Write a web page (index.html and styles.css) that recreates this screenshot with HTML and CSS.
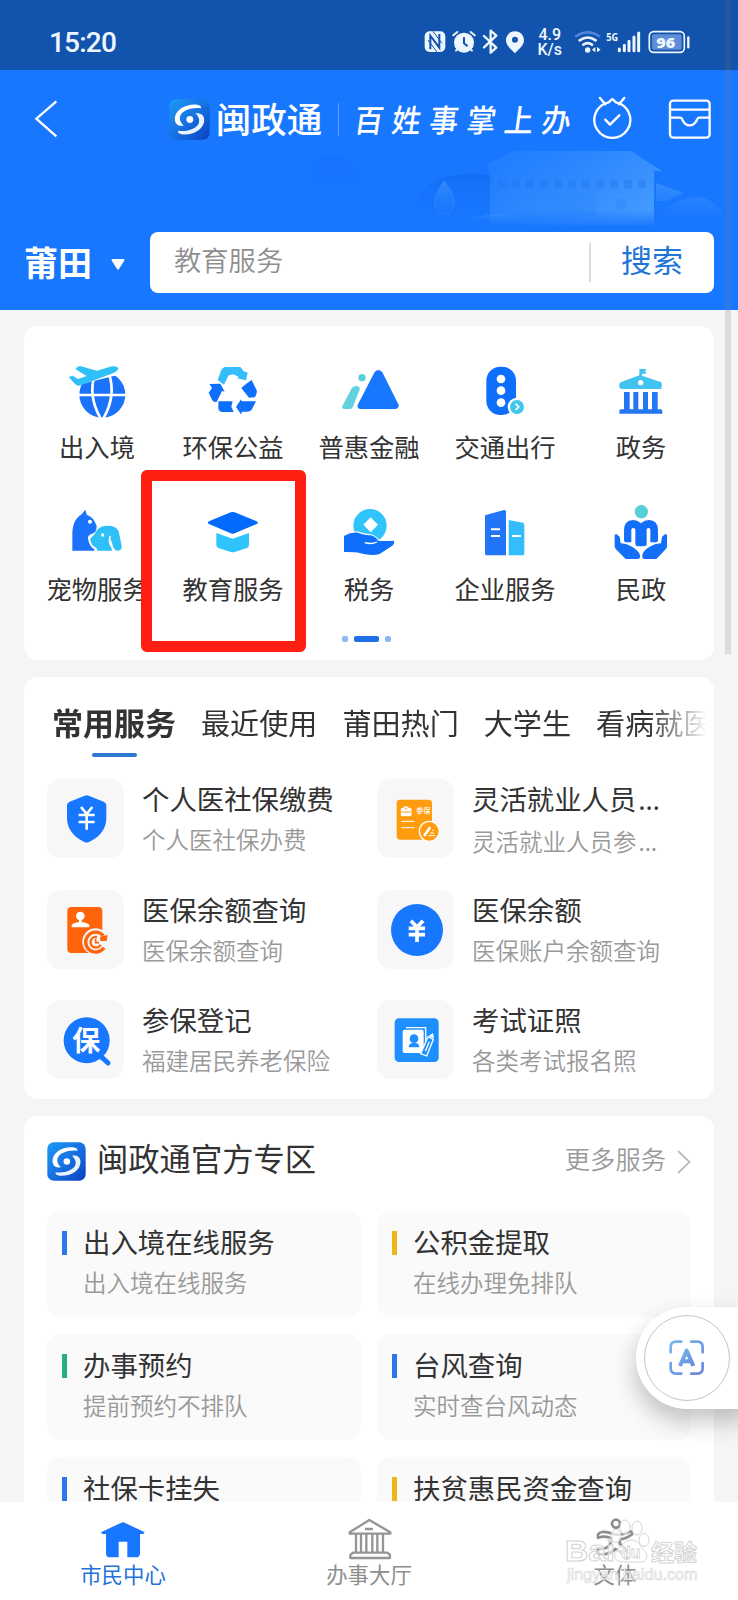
FILE: index.html
```html
<!DOCTYPE html>
<html lang="zh-CN">
<head>
<meta charset="utf-8">
<title>闽政通</title>
<link rel="stylesheet" href="styles.css">
</head>
<body>
<svg width="0" height="0" class="defs">
  <defs>
    <linearGradient id="logoBg" x1="0" y1="0" x2="1" y2="1"><stop offset="0" stop-color="#1b9bf5"/><stop offset=".5" stop-color="#1672e2"/><stop offset="1" stop-color="#0b3fc0"/></linearGradient>
    <linearGradient id="wall" x1="0" y1="0" x2="1" y2=".6"><stop offset="0" stop-color="#3a92ff" stop-opacity=".2"/><stop offset="1" stop-color="#55a8ff" stop-opacity=".7"/></linearGradient>
    <linearGradient id="fade" x1="0" y1="0" x2="0" y2="1"><stop offset="0" stop-color="#5aaaff" stop-opacity=".45"/><stop offset="1" stop-color="#3a90ff" stop-opacity="0"/></linearGradient>
    <linearGradient id="hill" x1="0" y1="0" x2="0" y2="1"><stop offset="0" stop-color="#0d63e8" stop-opacity=".55"/><stop offset="1" stop-color="#1877ff" stop-opacity="0"/></linearGradient>
    <linearGradient id="scan" x1="0" y1="0" x2="1" y2="1"><stop offset="0" stop-color="#79b8e8"/><stop offset=".5" stop-color="#6d9fe6"/><stop offset="1" stop-color="#6b86d8"/></linearGradient>
    <symbol id="logo" viewBox="0 0 120 120">
      <rect x="1" y="1" width="118" height="118" rx="20" fill="url(#logoBg)"/>
      <path d="M17 60C16 34 44 15 78 16C90 17 96 22 93 27C70 23 36 32 32 52C30 62 35 70 43 78C28 80 18 74 17 60Z" fill="#fff"/>
      <path d="M103 60C104 86 76 105 42 104C30 103 24 98 27 93C50 97 84 88 88 68C90 58 85 50 77 42C92 40 102 46 103 60Z" fill="#eaf3ff"/>
      <circle cx="61" cy="60" r="10" fill="#fff"/>
    </symbol>
  </defs>
</svg>

<div class="screen">
  <div class="status">
    <span class="time">15:20</span>
    <div class="indicators">
      <svg class="sys" viewBox="165 84 310 84" width="103.300" height="28">
        <rect x="170" y="94" width="62" height="62" rx="15" fill="#eef7ff"/>
        <path d="M187 148V107L214 143V102" fill="none" stroke="#1153ad" stroke-width="6"/>
        <path d="M195 94L222 130M180 120L207 156" fill="none" stroke="#1153ad" stroke-width="3"/>
        <circle cx="288" cy="128" r="30" fill="#eef7ff"/>
        <path d="M256 106L268 96M320 106L308 96M264 152L270 146M312 152L306 146" stroke="#eef7ff" stroke-width="6" stroke-linecap="round"/>
        <path d="M288 112V130L299 139" fill="none" stroke="#1153ad" stroke-width="6"/>
        <path d="M348 108L385 143L368 158V92L385 107L348 142" fill="none" stroke="#eef7ff" stroke-width="7" stroke-linejoin="round" stroke-linecap="round"/>
        <path d="M441 94C425 94 414 106 414 121C414 138 430 148 441 160C452 148 468 138 468 121C468 106 457 94 441 94Z" fill="#eef7ff"/>
        <circle cx="441" cy="119" r="9" fill="#1153ad"/>
      </svg>
      <div class="speed"><span>4.9</span><span>K/s</span></div>
      <svg class="net" viewBox="615 84 355 84" width="118.300" height="28">
        <path d="M622 108Q656 86 690 108" fill="none" stroke="#4f86d6" stroke-width="8" stroke-linecap="round"/>
        <path d="M632 121Q656 104 680 121M643 134Q656 125 669 134" fill="none" stroke="#eef7ff" stroke-width="8" stroke-linecap="round"/>
        <circle cx="656" cy="150" r="8" fill="#eef7ff"/>
        <path d="M679 141V157L669 149ZM684 141V157L695 149Z" fill="#eef7ff"/>
        <text x="712" y="122" class="gen" textLength="36" lengthAdjust="spacingAndGlyphs">5G</text>
        <path d="M751 147V152M766 136V152M780 124V152M795 111V152M809 99V152" stroke="#eef7ff" stroke-width="9" stroke-linecap="round"/>
        <rect x="841" y="95" width="105" height="62" rx="13" fill="none" stroke="#eef7ff" stroke-width="5"/>
        <rect x="849" y="103" width="89" height="46" rx="6" fill="#5f8dd6"/>
        <path d="M958 112V142" stroke="#eef7ff" stroke-width="7" stroke-linecap="round"/>
        <text x="862" y="143" class="pct" textLength="57" lengthAdjust="spacingAndGlyphs">96</text>
      </svg>
    </div>
  </div>

  <header class="head">
    <svg class="art" viewBox="0 0 480 100" width="480" height="100">
      <path d="M10 62Q30 60 40 44Q44 18 64 18Q84 18 92 38Q108 54 122 60V90H0Z" fill="url(#hill)" opacity=".25"/>
      <path d="M146 66Q160 37 200 37Q216 36 226 40V85H142Z" fill="url(#hill)" opacity=".8"/>
      <path class="melt" d="M218 28L246 14H363L394 34H386V88H222V36Z" fill="url(#wall)"/>
      <path d="M230 47H378" stroke="#1f74e6" stroke-width="9" stroke-dasharray="8 6" opacity=".35"/>
      <path d="M286 56H328V80H286ZM252 62H262V72H252ZM348 62H358V72H348Z" fill="#2d86f8" opacity=".4"/>
      <path d="M176 44C170 52 167 58 167 65C167 73 171 77 176 77C182 77 186 73 186 65C186 58 182 52 176 44Z" fill="url(#fade)" stroke="#4ba3ff" stroke-opacity=".3"/>
      <path d="M196 86Q228 68 262 86Z" fill="url(#fade)"/>
      <path d="M388 46L416 56L398 64H388ZM390 86Q398 62 430 60Q450 62 460 86Z" fill="url(#fade)"/>
    </svg>
    <div class="titlebar">
      <svg class="back" viewBox="94 296 74 120" width="24.700" height="40"><path d="M164 303L104 355L164 408" fill="none" stroke="#fff" stroke-width="7"/></svg>
      <div class="brand">
        <svg width="41" height="41"><use href="#logo"/></svg>
        <span class="brand-name">闽政通</span>
        <span class="brand-line"></span>
        <span class="slogan">百姓事掌上办</span>
      </div>
      <svg class="tool" viewBox="672 286 124 142" width="41.300" height="47.300">
        <g fill="none" stroke="#fff" stroke-width="7" stroke-linecap="round" stroke-linejoin="round">
          <path d="M722 308A54 54 0 1 0 744 308L733 298Z"/><path d="M696 295L712 314M769 295L753 314M712 360L726 375L754 347"/>
        </g>
      </svg>
      <svg class="tool inbox" viewBox="898 292 136 128" width="45.300" height="42.700">
        <g fill="none" stroke="#fff" stroke-width="7">
          <rect x="907" y="300" width="119" height="111" rx="10"/><path d="M907 327H1026M907 351H938C947 351 943 374 966 374C989 374 985 351 994 351H1026"/>
        </g>
      </svg>
    </div>
    <div class="searchrow">
      <span class="city">莆田</span>
      <svg class="caret" viewBox="0 0 14 11" width="14" height="11"><path d="M1 0H13Q14 .5 13 2L8 10Q7 11 6 10L1 2Q0 .5 1 0Z" fill="#fff"/></svg>
      <div class="search"><span class="ph">教育服务</span><span class="sep"></span><span class="go">搜索</span></div>
    </div>
  </header>

  <main class="content">
    <section class="card cats">
      <div class="grid">
        <div class="cat">
          <svg viewBox="201 123 180 180">
            <circle cx="307" cy="224" r="69" fill="#1c73fb"/>
            <g fill="none" stroke="#fff" stroke-width="8"><path d="M236 225H378M286 158Q262 226 302 296M326 158Q350 226 310 296"/></g>
            <path d="M205 202L362 163V130H205Z" fill="#fff"/>
            <path d="M206 171L218 167L234 177L260 168L227 148Q230 138 243 139L291 152L330 140Q350 136 355 145Q354 155 335 161L242 196Q232 199 225 192Z" fill="#2fc0f8"/>
          </svg><span>出入境</span></div>
        <div class="cat">
          <svg viewBox="609 123 180 180">
            <path d="M675 141H721L731 154L743 158L738 181L711 175L717 171L700 163L686 166L672 194L653 180L664 150Q668 142 675 141Z" fill="#33bdfa"/>
            <path d="M628 192L661 191L674 215L666 213L650 246Q640 248 636 239L626 218L636 204ZM741 190L755 180L770 211Q772 221 765 232L747 233L724 204ZM655 244H698L694 260L701 276H668Q656 276 655 265ZM708 261L723 238L725 244H768L755 269Q750 275 741 275H725L724 284Z" fill="#0d6ffb"/>
          </svg><span>环保公益</span></div>
        <div class="cat">
          <svg viewBox="1017 123 180 180">
            <circle cx="1086" cy="173" r="11" fill="#5bd0d8"/>
            <path d="M1056 203Q1062 197 1070 198Q1081 200 1079 209L1058 262Q1056 267 1050 267H1033Q1024 266 1027 258Z" fill="#62d3dc"/>
            <path d="M1124 156Q1135 144 1147 157L1195 253Q1199 264 1188 267H1081Q1069 265 1074 253Z" fill="#1877ff"/>
          </svg><span>普惠金融</span></div>
        <div class="cat">
          <svg viewBox="321 123 180 180">
            <rect x="355" y="140" width="89" height="145" rx="42" fill="#0d6ffb"/>
            <g fill="#fff"><circle cx="399" cy="177" r="13"/><circle cx="399" cy="212" r="13"/><circle cx="399" cy="248" r="13"/><circle cx="447" cy="261" r="28"/></g>
            <circle cx="447" cy="261" r="21" fill="#41c6ee"/>
            <path d="M443 251L452 261L443 270" fill="none" stroke="#fff" stroke-width="5"/>
          </svg><span>交通出行</span></div>
        <div class="cat">
          <svg viewBox="729 123 180 180">
            <path d="M814 166V147H836L831 154L836 161H822V167L880 187Q884 196 880 206Q877 208 873 207H761Q752 205 754 191L758 187Z" fill="#40c4ef"/>
            <circle cx="818" cy="188" r="8" fill="#fff"/>
            <path d="M768 216H785V268H796V216H811V268H825V216H840V268H852V216H869V268H879Q883 269 883 275V281H754V275Q754 269 758 268H768Z" fill="#2377f2"/>
          </svg><span>政务</span></div>
        <div class="cat">
          <svg viewBox="201 549 180 180">
            <path d="M217 692V640C218 608 230 592 245 583L256 569L260 584Q280 592 285 607L290 618Q290 636 280 640Q262 645 264 657Q270 683 283 687V692Z" fill="#1c73fb"/>
            <circle cx="270" cy="605" r="6" fill="#fff"/>
            <path d="M270 657Q286 642 292 629Q302 617 322 617Q350 617 356 634L365 678Q366 690 355 692Q345 693 341 684L333 661Q328 650 330 677Q337 685 336 692H292Q291 682 280 679Q272 670 270 657Z" fill="#2fc0f8"/>
            <circle cx="308" cy="645" r="5" fill="#fff"/><path d="M330 648Q326 662 331 674" fill="none" stroke="#fff" stroke-width="5"/>
          </svg><span>宠物服务</span></div>
        <div class="cat">
          <svg viewBox="609 549 180 180">
            <path d="M649 639L698 656L747 639V675Q747 681 741 684L704 696Q698 698 692 696L655 684Q649 681 649 675Z" fill="#2fc4fb"/>
            <path d="M692 577Q698 575 704 577L770 604Q777 608 770 612L704 640Q698 643 692 640L627 612Q620 608 627 604Z" fill="#026bfd"/>
          </svg><span>教育服务</span></div>
        <div class="cat">
          <svg viewBox="1017 549 180 180">
            <circle cx="1110" cy="617" r="50" fill="#2fc4fb"/><path d="M1112 592L1134 614L1112 637L1090 614Z" fill="#fff"/>
            <path d="M1032 648Q1052 636 1074 638Q1098 646 1112 646Q1128 650 1134 662Q1155 664 1181 662Q1185 668 1179 676L1140 701Q1124 708 1096 703Q1070 694 1032 696Z" fill="#0d6ffb" stroke="#fff" stroke-width="7" paint-order="stroke"/>
            <path d="M1094 668Q1115 674 1131 666" fill="none" stroke="#fff" stroke-width="4"/>
          </svg><span>税务</span></div>
        <div class="cat">
          <svg viewBox="321 549 180 180">
            <path d="M351 586L408 570Q414 569 414 576V706H356Q351 706 351 701Z" fill="#2275f6"/>
            <path d="M422 600L464 608Q469 609 469 616V701Q469 706 464 706H422Z" fill="#33bdfa"/>
            <path d="M369 628H396M369 648H396M432 648H459" stroke="#fff" stroke-width="6"/>
          </svg><span>企业服务</span></div>
        <div class="cat">
          <svg viewBox="729 549 180 180">
            <circle cx="820" cy="575" r="20" fill="#58d0d8"/>
            <path d="M768 662V630Q768 602 795 600Q808 600 819 610Q830 600 843 600Q870 602 870 630V662Q867 668 860 667H847V628Q842 620 836 628V676Q831 679 825 679H809Q803 679 802 672V628Q796 620 790 628V667H779Q770 668 768 662ZM740 646Q740 642 746 643L755 650L758 670Q774 670 792 680Q812 692 816 705V712Q815 717 809 717H773L744 688Q740 683 740 678ZM897 646Q897 642 891 643L882 650L879 670Q863 670 845 680Q825 692 823 705V712Q824 717 829 717H865L893 688Q897 683 897 678Z" fill="#146ff8"/>
          </svg><span>民政</span></div>
      </div>
      <div class="pager"><i></i><i class="on"></i><i></i></div>
      <div class="mark"></div>
    </section>

    <section class="card services">
      <div class="tabs"><span class="tab on">常用服务</span><span class="tab">最近使用</span><span class="tab">莆田热门</span><span class="tab">大学生</span><span class="tab">看病就医</span></div>
      <div class="list">
        <div class="svc"><div class="ic"><svg viewBox="142 328 228 234">
          <path d="M255 378Q261 375 267 378L312 396Q320 399 320 407V445C320 482 295 505 268 517Q261 520 254 517C228 505 202 482 202 445V407Q202 399 210 396Z" fill="#1877ff"/>
          <path d="M244 412L261 433L278 412M261 433V480M237 436H285M237 457H285" fill="none" stroke="#fff" stroke-width="8"/></svg></div>
          <div class="tx"><b>个人医社保缴费</b><em>个人医社保办费</em></div></div>
        <div class="svc"><div class="ic"><svg viewBox="28 328 228 234">
          <rect x="87" y="390" width="106" height="120" rx="10" fill="#ff9c10"/>
          <path d="M101 417H109V412H121V417H130V438H101ZM101 455H140M101 474H140" fill="#fff" stroke="#fff" stroke-width="3"/>
          <path d="M101 427H130M112 417H118" stroke="#ff9c10" stroke-width="3"/>
          <text x="145" y="431" class="mini">参保</text>
          <circle cx="185" cy="485" r="30" fill="#ff9c10" stroke="#fff" stroke-width="4"/>
          <path d="M171 496L186 475" stroke="#fff" stroke-width="8" stroke-linecap="round"/><path d="M182 498H203M188 490H199M194 482H199" stroke="#fff" stroke-width="3"/></svg></div>
          <div class="tx"><b>灵活就业人员<i class="dots">…</i></b><em>灵活就业人员参<i class="dots">…</i></em></div></div>
        <div class="svc"><div class="ic"><svg viewBox="142 660 228 234">
          <rect x="203" y="711" width="105" height="138" rx="12" fill="#ff640a"/>
          <circle cx="242" cy="738" r="13" fill="#fff"/><path d="M238 748H246V756Q265 758 269 766V772H216V766Q220 758 238 756Z" fill="#fff"/>
          <circle cx="288" cy="815" r="40" fill="#f7f7f7"/>
          <path d="M311 797A30 30 0 1 0 313 833" fill="none" stroke="#ff640a" stroke-width="10"/><path d="M301 800L324 795L321 813H302Z" fill="#ff640a"/>
          <path d="M303 824A16 16 0 1 1 292 801" fill="none" stroke="#ff640a" stroke-width="7"/><path d="M288 806V818H298" fill="none" stroke="#ff640a" stroke-width="5"/></svg></div>
          <div class="tx"><b>医保余额查询</b><em>医保余额查询</em></div></div>
        <div class="svc"><div class="ic"><svg viewBox="28 660 228 234">
          <circle cx="148" cy="780" r="78" fill="#1877ff"/>
          <path d="M130 752L148 772L166 752M148 772V816M123 775H172M123 794H172" fill="none" stroke="#fff" stroke-width="11"/></svg></div>
          <div class="tx"><b>医保余额</b><em>医保账户余额查询</em></div></div>
        <div class="svc"><div class="ic"><svg viewBox="142 992 228 234">
          <path d="M300 1158L325 1181" stroke="#1877ff" stroke-width="15" stroke-linecap="round"/><circle cx="261" cy="1113" r="69" fill="#1877ff"/>
          <text x="218" y="1144" class="bao">保</text></svg></div>
          <div class="tx"><b>参保登记</b><em>福建居民养老保险</em></div></div>
        <div class="svc"><div class="ic"><svg viewBox="28 992 228 234">
          <rect x="81" y="1047" width="132" height="131" rx="13" fill="#1e8fff"/>
          <path d="M115 1075H174V1130" fill="none" stroke="#fff" stroke-width="4"/><rect x="105" y="1081" width="63" height="70" rx="6" fill="#fff"/>
          <circle cx="139" cy="1108" r="13" fill="#1e8fff"/><path d="M123 1134Q123 1123 134 1121H144Q155 1123 155 1134Z" fill="#1e8fff"/>
          <path d="M181 1102L197 1110L177 1160L159 1153Z" fill="#1e8fff" stroke="#fff" stroke-width="4"/><path d="M183 1100L196 1091L199 1107Z" fill="#fff"/><path d="M185 1117L173 1145" stroke="#fff" stroke-width="4"/></svg></div>
          <div class="tx"><b>考试证照</b><em>各类考试报名照</em></div></div>
      </div>
    </section>

    <section class="card zone">
      <div class="zone-head"><svg width="39" height="39"><use href="#logo"/></svg><h2>闽政通官方专区</h2><span class="more">更多服务</span>
        <svg class="chev" viewBox="0 0 14 24" width="14" height="24"><path d="M1 1L12.500 12L1 23" fill="none" stroke="#bcbcbc" stroke-width="1.800"/></svg></div>
      <div class="tiles">
        <div class="tile blue"><b>出入境在线服务</b><em>出入境在线服务</em></div>
        <div class="tile gold"><b>公积金提取</b><em>在线办理免排队</em></div>
        <div class="tile green"><b>办事预约</b><em>提前预约不排队</em></div>
        <div class="tile blue"><b>台风查询</b><em>实时查台风动态</em></div>
        <div class="tile blue"><b>社保卡挂失</b></div>
        <div class="tile gold"><b>扶贫惠民资金查询</b></div>
      </div>
    </section>
  </main>

  <nav class="nav">
    <div class="navi on"><svg viewBox="297 110 144 132" width="48" height="44"><path d="M364 127Q369 125 374 127L434 156L430 161H420V220Q419 231 408 231H382V184H356V231H330Q319 231 318 220V161H307L303 156Z" fill="#1877ff"/></svg><span>市民中心</span></div>
    <div class="navi"><svg viewBox="-72 110 144 132" width="48" height="44"><g fill="none" stroke="#959595" stroke-width="7" stroke-linejoin="round"><path d="M1 119L64 156V160H-58V156ZM-56 233V224L-48 217H55L63 224V233ZM-39 160V217M-24 160V217M-8 160V217M10 160V217M25 160V217M42 160V217M-12 146H12"/></g></svg><span>办事大厅</span></div>
    <div class="navi"><svg viewBox="669 110 144 132" width="48" height="44"><g fill="none" stroke="#8d8d8d" stroke-width="8" stroke-linecap="round"><circle cx="744" cy="130" r="12"/><path d="M690 172Q686 158 702 155Q718 154 733 160Q757 168 787 153Q795 154 792 162Q772 176 756 177L755 190Q780 208 782 232Q776 240 769 231Q763 214 742 206Q724 225 694 221Q682 212 694 205Q718 208 727 190L731 174Q712 165 690 172Z"/></g></svg><span>文体</span></div>
  </nav>

  <div class="watermark">
    <svg viewBox="0 0 140 72" width="140" height="72">
      <text x="4" y="61" class="wm-lat" textLength="50" lengthAdjust="spacingAndGlyphs">Bai</text>
      <g fill="#fff" fill-opacity=".7" stroke="#d4d4d4" stroke-width="1">
        <path d="M70 40C77 40 78 45 83 50C89 57 85 63 77 62H62C54 62 51 56 56 50C61 45 64 40 70 40Z"/>
        <ellipse cx="55" cy="36" rx="5" ry="6.500"/><ellipse cx="64" cy="27" rx="5" ry="7"/><ellipse cx="76" cy="28" rx="5" ry="7"/><ellipse cx="83" cy="40" rx="5" ry="6.500"/>
      </g>
      <text x="60" y="58" class="wm-du">du</text><text x="90" y="61" class="wm-cn">经验</text>
    </svg>
    <span class="wm-url">jingyan.baidu.com</span>
  </div>

  <div class="float"><div class="ring"><svg viewBox="900 716 112 112" width="37.300" height="37.300">
    <path d="M908 756V740Q908 724 924 724H940M970 724H988Q1004 724 1004 740V756M1004 788V804Q1004 820 988 820H970M940 820H924Q908 820 908 804V788" fill="none" stroke="url(#scan)" stroke-width="8" stroke-linecap="round"/>
    <path d="M936 797L956 751L976 797M943 783H969" fill="none" stroke="url(#scan)" stroke-width="12" stroke-linejoin="round"/></svg></div></div>
  <div class="scrollbar"></div>
</div>
</body>
</html>
```

FILE: styles.css
```css
* { box-sizing: border-box; }
body { margin: 0; font-family: "Noto Sans CJK SC", "Noto Sans", sans-serif; color: #333; }
.defs { position: absolute; }
svg { display: block; flex: none; }
em, b, i { font-style: normal; font-weight: 400; }
.screen { position: relative; width: 738px; height: 1600px; overflow: hidden; background: #f5f5f6; display: flex; flex-direction: column; }

/* status bar */
.status { height: 70px; flex: none; background: #1153ad; display: flex; justify-content: space-between; padding: 14px 46px 0 49px; color: #eef7ff; }
.time { font: 500 28px/58px Roboto, sans-serif; letter-spacing: -.8px; }
.indicators { display: flex; align-items: center; height: 56px; }
.speed { display: flex; flex-direction: column; width: 28px; margin: 0 10px 0 9px; font: 500 16px/15px Roboto, sans-serif; align-items: center; }
.gen { font: 700 34px "Open Sans", sans-serif; fill: #eef7ff; }
.pct { font: 800 44px "Open Sans", sans-serif; fill: #eef7ff; }

/* header */
.head { position: relative; height: 240px; flex: none; background: #1877ff; color: #fff; }
.art { position: absolute; left: 268px; top: 67px; -webkit-mask-image: linear-gradient(#000 72px, transparent 92px); mask-image: linear-gradient(#000 72px, transparent 92px); }
.titlebar { position: relative; display: flex; align-items: center; height: 98px; padding-left: 33px; }
.brand { display: flex; align-items: center; margin-left: 111px; width: 423px; }
.brand-name { font-size: 35.500px; font-weight: 500; line-height: 40px; margin: -3px 0 0 6px; width: 107px; white-space: nowrap; }
.brand-line { width: 1px; height: 33px; background: #5a9fff; margin-left: 15px; }
.slogan { font-size: 29px; font-weight: 500; letter-spacing: 8.500px; line-height: 40px; margin: -3px 0 0 16px; white-space: nowrap; transform: skewX(-8deg) scaleY(1.08); }
.inbox { margin-left: 34.500px; }
.searchrow { position: relative; display: flex; align-items: center; margin-top: 64px; height: 61px; padding-left: 24px; }
.city { font-size: 34px; font-weight: 700; line-height: 61px; width: 68px; margin-top: -3px; }
.caret { margin-left: 19px; margin-top: 3px; }
.search { margin-left: 25px; width: 564px; height: 61px; background: #fff; border-radius: 8px; display: flex; align-items: center; padding-left: 24px; }
.ph { font-size: 27.300px; line-height: 50px; color: #8f8f8f; width: 415px; margin-top: -7px; font-weight: 350; }
.sep { width: 2px; height: 39px; background: #dcdcdc; }
.go { font-size: 31px; line-height: 50px; color: #2175d9; margin: -7px 0 0 30px; }

/* cards */
.content { flex: 1; min-height: 0; overflow: hidden; padding: 16px 24px 0 24px; display: flex; flex-direction: column; gap: 17px; }
.card { background: #fff; border-radius: 14px; flex: none; }
.cats { position: relative; height: 334px; padding: 35px 4px 0 5px; }
.grid { display: grid; grid-template-columns: repeat(5, 136px); grid-auto-rows: 142px; }
.cat { display: flex; flex-direction: column; align-items: center; }
.cat svg { width: 60px; height: 60px; }
.cat span { font-size: 25.300px; line-height: 36px; margin-top: 7px; white-space: nowrap; }
.pager { display: flex; justify-content: center; align-items: center; gap: 6px; height: 6px; margin-top: -9px; margin-left: -7px; }
.pager i { width: 6px; height: 6px; border-radius: 2px; background: #8db8f3; }
.pager .on { width: 25px; background: #1f70e6; }
.mark { position: absolute; left: 117px; top: 144px; width: 165px; height: 182px; border: 11.500px solid #ff1e12; border-radius: 6px; }

.services { height: 422px; padding: 22px 5px 0 23px; }
.tabs { display: flex; gap: 25px; height: 58px; padding-left: 5px; overflow: hidden; white-space: nowrap; -webkit-mask-image: linear-gradient(90deg, #000 600px, transparent 660px); mask-image: linear-gradient(90deg, #000 600px, transparent 660px); }
.tab { font-size: 29.100px; line-height: 46px; flex: none; }
.tab.on { font-size: 31px; font-weight: 700; display: flex; flex-direction: column; align-items: center; }
.tab.on::after { content: ""; width: 45px; height: 4px; border-radius: 2px; background: #2f78d0; margin-top: 8px; }
.list { display: grid; grid-template-columns: 330px 330px; grid-auto-rows: 110.700px; padding-top: 22px; }
.svc { display: flex; gap: 18px; }
.ic { width: 77px; height: 79px; background: #f7f7f7; border-radius: 14px; flex: none; }
.ic svg { width: 76px; height: 78px; }
.tx { display: flex; flex-direction: column; white-space: nowrap; }
.tx b { font-size: 27.400px; line-height: 40px; margin-top: -1px; }
.tx em { font-size: 23.500px; line-height: 40px; color: #999; font-weight: 350; margin-top: 1px; }
.dots { font-family: "Noto Sans", sans-serif; margin-left: 2px; letter-spacing: 1px; }
.mini { font: 500 22px "Noto Sans CJK SC", sans-serif; fill: #fff; }
.bao { font: 700 84px "Noto Sans CJK SC", sans-serif; fill: #fff; }

.zone { height: 500px; padding: 25px 23px 0 23px; }
.zone-head { display: flex; align-items: center; height: 41px; }
.zone-head h2 { font-size: 31.300px; font-weight: 400; line-height: 40px; margin: -8px 0 0 11px; }
.more { font-size: 25.300px; line-height: 40px; margin: -7px 11px 0 auto; color: #999; font-weight: 350; }
.tiles { display: grid; grid-template-columns: 314px 314px; grid-auto-rows: 106px; gap: 17px 16px; margin-top: 29px; }
.tile { background: #fafafa; border-radius: 14px; padding: 10px 0 0 15px; display: flex; flex-direction: column; white-space: nowrap; }
.tile b { font-size: 27.400px; line-height: 40px; display: flex; align-items: center; gap: 16px; }
.tile b::before { content: ""; width: 5px; height: 24px; background: var(--c); margin-top: 3px; }
.tile em { font-size: 23.500px; line-height: 40px; color: #999; font-weight: 350; padding-left: 21px; margin-top: 1px; }
.blue { --c: #2a78ea; }
.gold { --c: #f0b41c; }
.green { --c: #25b07c; }

/* bottom navigation */
.nav { height: 98px; flex: none; background: #fff; display: grid; grid-template-columns: repeat(3, 246px); }
.navi { display: flex; flex-direction: column; align-items: center; padding-top: 15px; color: #8d8d8d; font-size: 21.400px; line-height: 28px; }
.navi span { margin-top: -1px; }
.navi.on { color: #1f72d8; }

/* overlays */
.watermark { position: absolute; left: 561px; top: 1500px; width: 140px; }
.wm-lat { font: 700 29px "Liberation Sans", sans-serif; fill: rgba(255,255,255,.6); stroke: #d4d4d4; }
.wm-du { font: 700 16px "Liberation Sans", sans-serif; fill: #fff; stroke: #d4d4d4; stroke-width: .8px; }
.wm-cn { font: 700 23px "Noto Sans CJK SC", sans-serif; fill: rgba(255,255,255,.6); stroke: #d4d4d4; }
.wm-url { display: block; margin: -7px 0 0 6px; font: 16.200px/18px "Liberation Sans", sans-serif; color: rgba(255,255,255,.7); -webkit-text-stroke: .7px #dadada; }
.float { position: absolute; left: 636px; top: 1307px; width: 112px; height: 102px; border-radius: 51px 0 0 51px; background: #fff; box-shadow: 0 12px 24px rgba(0,0,0,.24); padding: 8px 0 0 8px; }
.ring { width: 86px; height: 86px; border: 1.500px solid #c4c4c4; border-radius: 50%; display: flex; align-items: center; justify-content: center; }
.scrollbar { position: absolute; left: 725px; top: 0; width: 6px; height: 654px; background: rgba(120,120,125,.2); }
```
